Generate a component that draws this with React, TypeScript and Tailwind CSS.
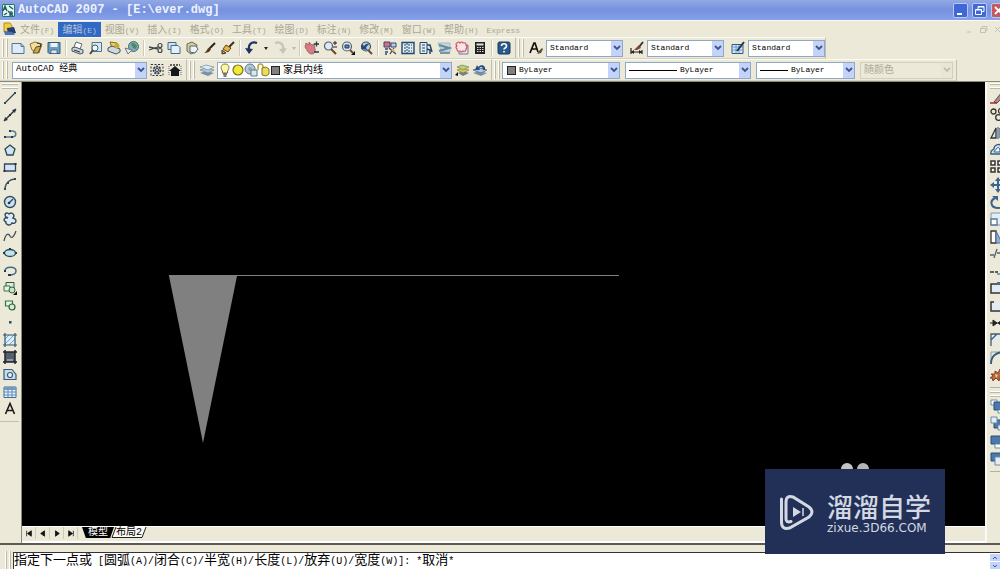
import type { ReactNode } from 'react'

const icons: Record<string, ReactNode> = {
  new: <path d="M2 3.500h9l3 3v7H2z M11 3.500v3h3" fill="#dcebf7" stroke="#4f7696" />,
  open: <><path d="M2 4l5-2 7 2-3 9-7-3z" fill="#f3df9b" stroke="#8a7738" /><path d="M5 13l3-6 5-1-3 7z" fill="#d2aa45" stroke="#5e4e25" /><path d="M9 3l4 1-1 3" stroke="#333" fill="none" /></>,
  save: <><path d="M2 2.500h12v11H3l-1-1z" fill="#6d9cc2" stroke="#335a7b" /><path d="M4.500 3h7v4h-7z" fill="#eef5fa" /><path d="M5 10h6v3.500H5z" fill="#dce7ee" stroke="#335a7b" strokeWidth=".7" /></>,
  print: <><path d="M4 7l2-5 6 2-2 5" fill="#fff" stroke="#5a6a78" /><path d="M2 8l3-1 8 3v3l-3 1-8-3z" fill="#c8d3dc" stroke="#44535f" /><path d="M4 10l6 2" stroke="#333" /></>,
  preview: <><path d="M4 2.500h9.500v9H4z" fill="#d7e7f4" stroke="#4f7696" /><circle cx="7" cy="8" r="3" fill="#eef8ff" stroke="#4d5b66" /><path d="M5 10l-3 4" stroke="#4b4b4b" strokeWidth="2" /></>,
  publish: <><path d="M4 2l7 1 2 6-7-1z" fill="#f0cf5e" stroke="#806b26" /><path d="M2 8l4-2 8 3v3l-4 2-8-3z" fill="#cfd8df" stroke="#44535f" /><circle cx="11" cy="6" r="2.500" fill="#c9a93a" /></>,
  globe: <><circle cx="9.500" cy="6.500" r="5" fill="#7ea9be" stroke="#456d78" /><path d="M7 4c3-3 4 1 6 1l-1 4-3-1z" fill="#4f8a5c" /><path d="M1 8l7 2-4 4z" fill="#e6e9ec" stroke="#6c7880" /></>,
  cut: <><path d="M1 7l9 2M1 10l9-3" stroke="#40484f" strokeWidth="1.300" /><circle cx="12" cy="10.500" r="2" fill="none" stroke="#40484f" strokeWidth="1.200" /><circle cx="12" cy="5.500" r="2" fill="none" stroke="#40484f" strokeWidth="1.200" /></>,
  copy: <><path d="M2 2.500h8v7H2z" fill="#cfe2f1" stroke="#42698a" /><path d="M5 5.500h7l2 2v6H5z" fill="#e4f0fa" stroke="#42698a" /></>,
  paste: <><path d="M3 4l5-2 5 3-1 7-5 2-4-3z" fill="#d7cf9e" stroke="#6d6847" /><path d="M6 6h6l2 3-3 4-5-1z" fill="#edf3f7" stroke="#51697b" /></>,
  brush: <><path d="M13 3L8 8" stroke="#222" strokeWidth="2" /><path d="M8 7l1 2c-1 3-4 4-7 4 3-1 3-5 6-6z" fill="#55371f" /></>,
  match: <><path d="M14 2L9 7" stroke="#3c3022" strokeWidth="2" /><path d="M6 5l5 3-3 4-5-3z" fill="#e8b14a" stroke="#60451b" /><path d="M2 10l4 3-4 1z" fill="#d69b3a" stroke="#333" /></>,
  undo: <><path d="M13 3C7 1 4 5 5 10" fill="none" stroke="#1b365f" strokeWidth="2.200" /><path d="M1 8l4 6 4-5z" fill="#1b365f" /></>,
  redo: <><path d="M3 3c6-2 9 2 8 7" fill="none" stroke="#c3c4c0" strokeWidth="2.200" /><path d="M15 8l-4 6-4-5z" fill="#c3c4c0" /></>,
  pan: <><path d="M2 3l3 2 0-3 3 3 2-1 1 5c1 3-1 5-3 5C4 14 3 10 1 7z" fill="#d57c83" stroke="#8f4c58" strokeWidth=".7" /><path d="M10 4h5M12.500 1.500v5M10 12h5" stroke="#283745" strokeWidth="1.300" /></>,
  zoomRt: <><circle cx="6.500" cy="6" r="4" fill="#dceaf4" stroke="#52616e" strokeWidth="1.200" /><path d="M9 9l5 5" stroke="#684a2f" strokeWidth="2" /><path d="M11 3h4M13 1v4M11 7h4" stroke="#222" /></>,
  zoomWin: <><circle cx="7" cy="6.500" r="4.500" fill="#dceaf4" stroke="#52616e" strokeWidth="1.200" /><path d="M5 5h4v3H5z" fill="#5f87b8" stroke="#233b61" /><path d="M10 10l3 3" stroke="#684a2f" strokeWidth="2" /><path d="M15 11v4h-4z" fill="#111" /></>,
  zoomPrev: <><circle cx="8" cy="6.500" r="4.500" fill="#bdd0e0" stroke="#42515f" strokeWidth="1.200" /><path d="M3 9l1-5 2 2c2-3 5-3 7-2-3 0-4 2-5 4l2 2z" fill="#264a7c" /><path d="M10 10l4 4" stroke="#684a2f" strokeWidth="2" /></>,
  props: <><path d="M2 2h6v5H2z" fill="#d86e76" stroke="#34447b" /><path d="M9 3h5v4H9z" fill="#b8cde3" stroke="#34447b" /><path d="M3 9h3M3 12h3M3 14h2M7 8l7 6M12 8l-4 6" stroke="#3c4566" strokeWidth="1.300" /><circle cx="11" cy="10" r="1.500" fill="#e6b74e" /></>,
  center: <><path d="M2 2.500h12v11H2z" fill="#dcecf8" stroke="#264763" strokeWidth="1.400" /><path d="M4 5h2M8 5h4M4 8h2M8 8h4M4 11h2M8 11h4M7 3v10" stroke="#264763" strokeDasharray="2 1" /></>,
  palettes: <><path d="M2 2.500h7v11H2z" fill="#dcecf8" stroke="#264763" /><path d="M4 5h3M4 8h3M4 11h3" stroke="#264763" /><path d="M9 5l3 0 2 7M9 9l3 1v4" fill="none" stroke="#264763" strokeWidth="1.500" /></>,
  sheet: <><path d="M2 3h12v9H6z" fill="#c9d6df" stroke="#a5b6c1" /><path d="M3 5l10 3-10 3" fill="none" stroke="#5f8b9f" strokeWidth="2" /><path d="M4 12h10v2H4z" fill="#7596a9" /></>,
  markup: <><path d="M5 5h9v9H5z" fill="#dfe5ea" stroke="#6d7f8f" /><path d="M3 3q2-2 3 0 2-2 3 0 3-1 3 2 2 2 0 4 0 3-3 2-2 2-3 0-3 1-3-2-2-2 0-3-2-2 0-3z" fill="#fbe4e6" stroke="#cf5468" strokeWidth="1.200" /></>,
  calc: <><path d="M3 2h10v12H3z" fill="#222" /><path d="M4.500 3.500h7v2h-7z" fill="#d8e4d8" /><path d="M5 7.500h7M5 9.500h7M5 11.500h7" stroke="#ddd" strokeDasharray="1.500 1" /></>,
  help: <><rect x="2" y="2" width="12" height="12" rx="1.500" fill="#285a8e" stroke="#17395c" /><path d="M5.500 6c0-3 5-3 5 0 0 2-2.500 2-2.500 3.500M8 11v1.500" stroke="#fff" strokeWidth="1.600" fill="none" /></>,
  textStyle: <><path d="M2 13L6 3h1l3 9M4 9h5" fill="none" stroke="#111" strokeWidth="1.700" /><path d="M14 8l-3 3-2 3 4-1 2-4z" fill="#5a4a38" /></>,
  dimStyle: <><path d="M2 8v6M2 12h11M13 10v4" stroke="#222" strokeWidth="1.200" /><path d="M2 12l3-2v4zM13 12l-3-2v4z" fill="#222" /><path d="M14 2l-4 5" stroke="#333" strokeWidth="2" /><path d="M10 5l2 3-4 2H5z" fill="#774837" /></>,
  tableStyle: <><path d="M2 4.500h11v9H2z" fill="#d7e8f6" stroke="#315a8b" /><path d="M2 7h11M6 5v8M9 5v8M2 10h11" stroke="#6f99c4" /><path d="M14 2L7 11" stroke="#24384d" strokeWidth="2" /></>,
  gear: <><path d="M2 2.500h12v11H2z" fill="none" stroke="#333" strokeDasharray="2 1.500" /><circle cx="8" cy="8" r="3.500" fill="#b5bec5" stroke="#35414b" strokeWidth="1.800" strokeDasharray="2 1" /><circle cx="8" cy="8" r="1.500" fill="#fff" stroke="#333" /></>,
  home: <><path d="M3 3h10" stroke="#333" strokeWidth="1.500" strokeDasharray="2 1" /><path d="M2 9l6-5 6 5h-2v5H4V9z" fill="#15181a" /><path d="M2 4v10M14 4v9" stroke="#666" strokeDasharray="1 1" /></>,
  layers: <><path d="M1 11l6-2 8 2-6 3z" fill="#7992a7" /><path d="M1 8l6-2 8 2-6 3z" fill="#b6cad9" stroke="#607c91" strokeWidth=".6" /><path d="M1 5l6-2 8 2-6 3z" fill="#dcebf4" stroke="#607c91" strokeWidth=".6" /></>,
  layerCur: <><path d="M4 11l5-2 6 2-6 3z" fill="#6d8396" /><path d="M3 8l5-2 7 2-6 3z" fill="#e1c848" stroke="#7c7131" strokeWidth=".6" /><path d="M3 5l5-2 7 2-6 3z" fill="#b6cf82" stroke="#65793e" strokeWidth=".6" /><path d="M1 13l3-3v4z" fill="#111" /></>,
  layerPrev: <><path d="M1 11l6-2 8 2-6 3z" fill="#7992a7" /><path d="M1 8l6-2 8 2-6 3z" fill="#b6cad9" stroke="#607c91" /><path d="M13 8c1-5-4-6-7-3L5 3 3 8l5 0-1-2c2-2 4-1 4 2z" fill="#274c82" /></>,
  bulb: <><path d="M5.500 9C3 6 4 2 8 2s5 4 2.500 7v2h-5z" fill="#fff6a5" stroke="#7b7440" /><path d="M6 12h4M6.500 14h3" stroke="#555" strokeWidth="1.400" /></>,
  sun: <circle cx="8" cy="8" r="5" fill="#f4e83c" stroke="#77721c" strokeWidth="1.200" />,
  freeze: <><circle cx="7" cy="7" r="5" fill="#b7c9d4" stroke="#5d7787" /><circle cx="7" cy="7" r="2" fill="#8fa9b8" /><path d="M8 8h6v6H8z" fill="#dce7ee" stroke="#5d7787" /></>,
  lock: <><path d="M2 8V5c0-4 5-4 5 0v2" fill="none" stroke="#b5a63a" strokeWidth="1.600" /><path d="M6 6l4-1 3 2v5l-3 2-4-1z" fill="#e6dc62" stroke="#857719" /></>,

  line: <><path d="M3 13L13 3" stroke="#39454e" strokeWidth="1.200" /><path d="M2 12h2v2H2zM12 2h2v2h-2z" fill="#264e66" /></>,
  xline: <><path d="M2 14L14 2" stroke="#30363b" strokeWidth="1.400" /><path d="M2 14l1-4 3 3zM14 2l-4 1 3 3zM7 7h2v2H7z" fill="#25343e" /></>,
  pline: <><path d="M2 12h8c5 0 5-6 0-6H8" fill="none" stroke="#56798f" strokeWidth="1.600" /><path d="M2 11h2v2H2zM9 11h2v2H9zM7 5h2v2H7z" fill="#253d4b" /></>,
  polygon: <path d="M8 3l5 4-2 6H5L3 7z" fill="#cce4ef" stroke="#2b4655" strokeWidth="1.300" />,
  rect: <><path d="M2.500 5h11v7h-11z" fill="#d5e4f5" stroke="#334557" strokeWidth="1.300" /><path d="M1.500 11h2v2h-2zM12.500 4h2v2h-2z" fill="#1b3448" /></>,
  arc: <><path d="M3 13C3 7 8 3 13 3" fill="none" stroke="#445460" strokeWidth="1.300" /><path d="M2 12h2v2H2zM5 6h2v2H5zM12 2h2v2h-2z" fill="#264e66" /></>,
  circle: <><circle cx="8" cy="8" r="5.500" fill="#cce2f0" stroke="#334a5b" strokeWidth="1.400" /><path d="M7 9l4-4" stroke="#244966" strokeWidth="1.300" /><circle cx="7" cy="9" r="1.300" fill="#193c57" /></>,
  cloud: <path d="M4 6C1 2 6 1 7 3c4-3 6 2 4 4 5 1 3 7-1 5-2 4-7 1-6-1-4-2-1-5 2-4z" fill="#dcebf3" stroke="#314c5c" strokeWidth="1.400" />,
  spline: <path d="M2 13C4 4 7 6 8 8s3 3 6-5" fill="none" stroke="#46525a" strokeWidth="1.300" />,
  ellipse: <><ellipse cx="8" cy="8" rx="5.500" ry="3.500" fill="#c1e1ed" stroke="#304957" strokeWidth="1.300" /><path d="M1 7h2v2H1zM7 3h2v2H7zM13 7h2v2h-2z" fill="#1d3b4b" /></>,
  earc: <><path d="M3 8c0-5 11-5 11 0 0 4-4 4-7 4" fill="none" stroke="#456b84" strokeWidth="1.500" /><path d="M2 7h2v2H2zM6 11h3v2H6z" fill="#233d4c" /></>,
  insert: <><path d="M4 2.500h8v6H4z" fill="#dcebdc" stroke="#36543d" /><path d="M2 6h6v5H2z" fill="#e4f3e3" stroke="#367442" /><circle cx="10" cy="10" r="3" fill="#cae1cc" stroke="#2e623b" /><path d="M15 11v4h-4z" fill="#111" /></>,
  block: <><path d="M3.500 4h7v5h-7z" fill="#e4f3e3" stroke="#367442" strokeWidth="1.200" /><circle cx="10" cy="10" r="3" fill="#d5ead8" stroke="#2e623b" strokeWidth="1.200" /></>,
  point: <path d="M7 7h2.500v2.500H7z" fill="#1c5368" />,
  hatch: <><path d="M3 3h10v10H3z" fill="#d9edfb" /><path d="M3 7l4-4M3 12l9-9M7 13l6-6" stroke="#76a6c6" /><path d="M3 1v14M13 1v14M1 3h14M1 13h14" stroke="#355468" strokeWidth="1.200" /></>,
  gradient: <><path d="M3 3h10v10H3z" fill="#555f69" /><path d="M5 10h6v2H5z" fill="#929ba3" /><path d="M3 1v14M13 1v14M1 3h14M1 13h14" stroke="#20272c" strokeWidth="1.500" /></>,
  region: <><path d="M2 3.500h8l4 5v5H2z" fill="#c5ddef" stroke="#385d7a" strokeWidth="1.200" /><circle cx="8" cy="9" r="2.500" fill="#f4f5ed" stroke="#385d7a" strokeWidth="1.200" /></>,
  table: <><path d="M2 3h12v10.500H2z" fill="#e7f1fa" stroke="#416b98" /><path d="M2 3h12v3H2z" fill="#759bc4" /><path d="M6 4v9M10 4v9M2 8h12M2 11h12" stroke="#5c8dba" /></>,
  mtext: <path d="M3.500 13L8 2.500 12.500 13M5 9.500h6" fill="none" stroke="#1b1b1b" strokeWidth="1.600" />,

  erase: <><path d="M4 12L12 2l3 3-8 8z" fill="#b78986" stroke="#5b4b4b" /><path d="M0 13h7" stroke="#a02a35" strokeWidth="1.500" /></>,
  copyObj: <><circle cx="3.500" cy="4.500" r="2.500" fill="none" stroke="#333" strokeWidth="1.300" /><circle cx="11" cy="4" r="2.500" fill="none" stroke="#333" strokeWidth="1.300" /><circle cx="8.500" cy="10.500" r="2.800" fill="none" stroke="#333" strokeWidth="1.300" /></>,
  mirror: <><path d="M1 13L6 3v10z" fill="#dbe7f0" stroke="#333" strokeWidth="1.300" /><path d="M8 2v12" stroke="#4a76ad" strokeWidth="1.300" /><path d="M15 13L10 3v10z" fill="#7fa3c8" stroke="#333" /></>,
  offset: <><path d="M1 12c-1-4 2-4 3-5 0-5 7-6 8-2 4 1 4 7 1 7z" fill="#d6e8f5" stroke="#355d80" strokeWidth="1.400" /><path d="M4 10c0-2 2-1 3-4 2-2 3 1 3 4z" fill="#fff" stroke="#355d80" /></>,
  array: <path d="M1 2h4v4H1zM8 2h4v4H8zM1 9h4v4H1zM8 9h4v4H8z" fill="#f6f6f0" stroke="#333" strokeWidth="1.500" />,
  move: <path d="M0 8l4-3v2h3V4H5l3-4 3 4H9v3h3V5l4 3-4 3V9H9v3h2l-3 4-3-4h2V9H4v2z" fill="#3e638f" />,
  rotate: <><path d="M5 4c-6 3-4 10 3 10 7 0 7-8 4-10" fill="none" stroke="#3e638f" strokeWidth="2" /><path d="M2 2h6v5z" fill="#3e638f" /></>,
  scale: <><path d="M1 2h12v12H1z" fill="#e3edf4" stroke="#8297a6" /><path d="M1 8h6v6H1z" fill="#fff" stroke="#577897" strokeWidth="1.300" /></>,
  stretch: <><path d="M1 2h5v12H1z" fill="#fff" stroke="#333" strokeWidth="1.300" /><path d="M6 2l6 12H6z" fill="#8db1d6" stroke="#4d6c91" /></>,
  trim: <path d="M0 9h4M7 7h6M4 12l3-9" stroke="#52626c" strokeWidth="1.300" />,
  extend: <><path d="M0 9h8" stroke="#333" strokeWidth="1.400" strokeDasharray="4 1" /><path d="M7 11h6" stroke="#4f83a4" strokeWidth="1.400" /></>,
  breakPt: <><path d="M1 4h12v9H1z" fill="#e1ebf3" stroke="#333" strokeWidth="1.500" /><path d="M7 2h3v3H7z" fill="#446d98" /></>,
  breakObj: <path d="M4 4H1v9h12V4h-3" fill="#e1ebf3" stroke="#333" strokeWidth="1.500" />,
  join: <path d="M0 8h13M3 5l4 3-4 3zM12 5L8 8l4 3z" fill="#222" stroke="#222" />,
  chamfer: <path d="M1 14V8l6-6h8M1 8V2h6" fill="#e1ebf3" stroke="#445b70" strokeWidth="1.300" />,
  fillet: <><path d="M1 14V2h12" fill="none" stroke="#8aa0b3" /><path d="M1 14C1 6 6 2 15 2" fill="none" stroke="#345a80" strokeWidth="1.800" /></>,
  explode: <><path d="M0 11l3-2-2-2 4 0 0-3 3 2 2-4 1 3 4-1-3 4 3 3-5-1-1 4-3-3-3 3-1-3z" fill="#b9683f" stroke="#7f4334" /><path d="M5 7l3 1-2 3z" fill="#f6ce75" /></>,
  front: <><path d="M1 1h6v5H1z" fill="#fff" stroke="#6d8ba5" /><path d="M4 3h9v8H4z" fill="#4b79ae" stroke="#284f7d" /><path d="M8 11h6v3H8z" fill="#fff" stroke="#6d8ba5" /></>,
  back: <><path d="M4 4h8v8H4z" fill="#4b79ae" stroke="#284f7d" /><path d="M1 1h6v6H1zM8 9h6v5H8z" fill="#e4edf4" stroke="#6d8ba5" /></>,
  above: <><path d="M1 2h13v8H1z" fill="#4b79ae" stroke="#284f7d" /><path d="M5 10h8v4H5z" fill="#fff" stroke="#6d8ba5" /></>,
  under: <><path d="M1 2h13v8H1z" fill="#4b79ae" stroke="#284f7d" /><path d="M5 6h8v8H5z" fill="#e4edf4" stroke="#6d8ba5" /></>,
}

function Icon({ name }: { name: string }) {
  return <svg viewBox="0 0 16 16" className="h-4 w-4 shrink-0" fill="none" aria-hidden="true">{icons[name]}</svg>
}

function Tool({ name }: { name: string }) {
  return (
    <button type="button" aria-label={name} className="h-4 w-4 shrink-0">
      <Icon name={name} />
    </button>
  )
}

function Tools({ names }: { names: string[] }) {
  return <div className="flex shrink-0 gap-0.5">{names.map(n => <Tool key={n} name={n} />)}</div>
}

function Grip() {
  return (
    <div className="mx-0.5 flex h-[18px] shrink-0 gap-0.5">
      <span className="w-[2px] border-l border-r border-l-white border-r-[#bdb9a6]" />
      <span className="w-[2px] border-l border-r border-l-white border-r-[#bdb9a6]" />
    </div>
  )
}

function Sep() {
  return <span className="mx-[3px] h-4 w-[2px] shrink-0 border-l border-r border-l-[#d0ccba] border-r-white" />
}

const band = 'flex h-[22px] shrink-0 items-center border-t border-r border-b border-t-[#fbfaf4] border-r-[#c3bfad] border-b-[#d5d1bf]'

function Combo({ label, value, width, text = 'text-[8px]', disabled, children }: {
  label: string; value: string; width: string; text?: string; disabled?: boolean; children?: ReactNode
}) {
  return (
    <label className={`flex h-[17px] shrink-0 items-center border ${width} ${disabled ? 'border-[#d3cfbd] bg-[#ece9d8]' : 'border-[#8fa9c4] bg-white'}`}>
      {children}
      <select
        aria-label={label}
        disabled={disabled}
        className={`h-[15px] min-w-0 flex-1 appearance-none bg-transparent pl-[3px] outline-none ${text} ${disabled ? 'text-[#aca899]' : 'text-black'}`}
      >
        <option>{value}</option>
      </select>
      <span className={`flex h-[15px] w-[11px] shrink-0 items-center justify-center ${disabled ? 'bg-[#e9e6d6]' : 'bg-[#c3d3fb]'}`}>
        <svg viewBox="0 0 8 6" className="h-[6px] w-2" fill="none">
          <path d="M1 1l3 3 3-3" stroke={disabled ? '#c2bfae' : '#3d5687'} strokeWidth="1.800" />
        </svg>
      </span>
    </label>
  )
}

const menus = [
  ['文件', '(F)'], ['编辑', '(E)'], ['视图', '(V)'], ['插入', '(I)'], ['格式', '(O)'], ['工具', '(T)'],
  ['绘图', '(D)'], ['标注', '(N)'], ['修改', '(M)'], ['窗口', '(W)'], ['帮助', '(H)'], ['', 'Express'],
]

const drawTools = [
  'line', 'xline', 'pline', 'polygon', 'rect', 'arc', 'circle', 'cloud', 'spline', 'ellipse',
  'earc', 'insert', 'block', 'point', 'hatch', 'gradient', 'region', 'table', 'mtext',
]
const modifyTools = [
  'erase', 'copyObj', 'mirror', 'offset', 'array', 'move', 'rotate', 'scale', 'stretch', 'trim',
  'extend', 'breakPt', 'breakObj', 'join', 'chamfer', 'fillet', 'explode',
]
const orderTools = ['front', 'back', 'above', 'under']

const prompt = [
  ['指定下一点或', ' ['], ['圆弧', '(A)/'], ['闭合', '(C)/'], ['半宽', '(H)/'], ['长度', '(L)/'],
  ['放弃', '(U)/'], ['宽度', '(W)]: *'], ['取消', '*'],
]

function TitleBar() {
  const btn = 'flex h-[15px] w-[15px] shrink-0 items-center justify-center rounded-[2px] border border-[#b9c8f2]'
  return (
    <header className="flex h-5 items-center overflow-hidden bg-linear-to-b from-[#93a9e4] via-[#7591df] to-[#86a2ec] pl-[2px]">
      <svg viewBox="0 0 13 13" className="h-[13px] w-[13px] shrink-0" fill="none">
        <path d="M0 0h13v13H0z" fill="#e8f2ee" />
        <path d="M.5.5h12v12H.5z" stroke="#27756f" />
        <path d="M1 7l2-5 2 5M2 5h2M7 2l4 3M6 7l5 5M8 12V8c3-1 3 3 0 3M2 11l3-2" stroke="#14605c" strokeWidth="1.300" />
      </svg>
      <h1 className="ml-[3px] flex-1 whitespace-pre text-[12px] leading-5 font-bold text-[#eef2ff]">AutoCAD 2007 - [E:\ever.dwg]</h1>
      <div className="-mr-[6px] flex gap-1">
        <button type="button" aria-label="最小化" className={`${btn} bg-[#3f68d4]`}>
          <svg viewBox="0 0 13 13" className="h-[13px] w-[13px]"><path d="M3 9h5v2H3z" fill="#fff" /></svg>
        </button>
        <button type="button" aria-label="还原" className={`${btn} bg-[#3f68d4]`}>
          <svg viewBox="0 0 13 13" className="h-[13px] w-[13px]" fill="none" stroke="#fff"><path d="M5 5V2.500h6v5H8.500M2.500 5.500h6v5h-6zM2.500 6h6M5 3h6" /></svg>
        </button>
        <button type="button" aria-label="关闭" className={`${btn} bg-[#c25a5e]`}>
          <svg viewBox="0 0 13 13" className="h-[13px] w-[13px]" stroke="#fff" strokeWidth="1.800"><path d="M3 3l7 7M10 3l-7 7" /></svg>
        </button>
      </div>
    </header>
  )
}

function MenuBar() {
  return (
    <nav className="flex h-[17px] items-center overflow-hidden border-t border-[#faf9f3] pl-[3px] text-[#aaa695]">
      <svg viewBox="0 0 13 14" className="h-[14px] w-[13px] shrink-0">
        <path d="M1 1h6l2 3v6H1z" fill="#f0cc45" stroke="#b08f24" />
        <path d="M4 6l7-1 2 6-8 2z" fill="#243d73" />
        <path d="M1 9l8 1 3 3H2z" fill="#4a72b5" />
      </svg>
      <div className="flex flex-1">
        {menus.map(([name, key]) => (
          <button
            key={name + key}
            type="button"
            className={`h-[15px] px-1 leading-[14px] whitespace-nowrap ${name === '编辑' ? 'bg-[#316ac5] text-[#b5c3d8]' : ''}`}
          >
            <span className="text-[10px]">{name}</span>
            <span className="text-[8px]">{key}</span>
          </button>
        ))}
      </div>
      <div className="-mr-[2px] flex gap-[5px]">
        <button type="button" aria-label="最小化窗口"><svg viewBox="0 0 9 9" className="h-[9px] w-[9px]"><path d="M2 7h4" stroke="#c5c2b2" /></svg></button>
        <button type="button" aria-label="还原窗口"><svg viewBox="0 0 9 9" className="h-[9px] w-[9px]" fill="none" stroke="#c5c2b2"><path d="M3 3V1.500h5v4H6.500M1.500 3.500h5v4h-5z" /></svg></button>
        <button type="button" aria-label="关闭窗口"><svg viewBox="0 0 9 9" className="h-[9px] w-[9px]" stroke="#c5c2b2"><path d="M2 2l5 5M7 2L2 7" /></svg></button>
      </div>
    </nav>
  )
}

function StandardToolbar() {
  return (
    <div className="flex overflow-hidden">
      <div className={`${band} w-[516px]`}>
        <Grip />
        <Tools names={['new', 'open', 'save']} />
        <Sep />
        <Tools names={['print', 'preview', 'publish', 'globe']} />
        <Sep />
        <Tools names={['cut', 'copy', 'paste', 'brush', 'match']} />
        <Sep />
        <div className="flex w-[52px] items-center gap-1">
          <Tool name="undo" />
          <svg viewBox="0 0 4 3" className="h-[3px] w-1"><path d="M0 0h4L2 3z" fill="#222" /></svg>
          <Tool name="redo" />
          <svg viewBox="0 0 4 3" className="h-[3px] w-1"><path d="M0 0h4L2 3z" fill="#bbb8a8" /></svg>
        </div>
        <Sep />
        <Tools names={['pan', 'zoomRt', 'zoomWin', 'zoomPrev']} />
        <Sep />
        <Tools names={['props', 'center', 'palettes', 'sheet', 'markup', 'calc']} />
        <Sep />
        <Tools names={['help']} />
      </div>
      <div className={`${band} gap-0.5`}>
        <Grip />
        <Tool name="textStyle" />
        <Combo label="文字样式" value="Standard" width="w-[77px]" />
        <span className="w-0.5" />
        <Tool name="dimStyle" />
        <Combo label="标注样式" value="Standard" width="w-[77px]" />
        <span className="w-0.5" />
        <Tool name="tableStyle" />
        <Combo label="表格样式" value="Standard" width="w-[77px]" />
      </div>
    </div>
  )
}

function LayerToolbar() {
  const swatch = 'h-[9px] w-[9px] shrink-0 border border-[#222] bg-[#808080]'
  return (
    <div className="flex overflow-hidden">
      <div className={`${band} w-[187px] gap-0.5`}>
        <Grip />
        <Combo label="工作空间" value="AutoCAD 经典" width="w-[135px]" text="text-[9px]" />
        <Tools names={['gear', 'home']} />
      </div>
      <div className={`${band} w-[305px] gap-0.5`}>
        <Grip />
        <Tool name="layers" />
        <Combo label="图层" value="家具内线" width="w-[235px]" text="text-[10px]">
          <span className="-ml-px flex shrink-0 items-center">
            <Icon name="bulb" />
            <span className="-ml-[3px]"><Icon name="sun" /></span>
            <span className="-ml-[3px]"><Icon name="freeze" /></span>
            <span className="-ml-[3px]"><Icon name="lock" /></span>
          </span>
          <span className={`${swatch} -ml-px`} />
        </Combo>
        <Tools names={['layerCur', 'layerPrev']} />
      </div>
      <div className={`${band} gap-[5px] pr-[3px]`}>
        <div className="flex items-center">
          <Grip />
          <Combo label="颜色" value="ByLayer" width="w-[118px]">
            <span className={`${swatch} ml-1`} />
          </Combo>
        </div>
        <Combo label="线型" value="ByLayer" width="w-[126px]">
          <span className="ml-[3px] h-px w-12 shrink-0 bg-black" />
        </Combo>
        <Combo label="线宽" value="ByLayer" width="w-[99px]">
          <span className="ml-[3px] h-px w-7 shrink-0 bg-black" />
        </Combo>
        <Combo label="打印样式" value="随颜色" width="w-[93px]" text="text-[10px]" disabled />
      </div>
    </div>
  )
}

function SideGrip() {
  return (
    <div className="flex w-4 shrink-0 flex-col gap-0.5">
      <span className="h-[2px] border-t border-b border-t-white border-b-[#bdb9a6]" />
      <span className="h-[2px] border-t border-b border-t-white border-b-[#bdb9a6]" />
    </div>
  )
}

function SheetTabs() {
  const nav = ['M3 1v7M9 1v7L4 4.500z', 'M8 1v7L3 4.500z', 'M4 1v7l5-3.500z', 'M9 1v7M3 1v7l5-3.500z']
  return (
    <div className="flex h-[17px] items-start border-t border-b-2 border-t-white border-b-white">
      {nav.map((d, i) => (
        <button key={i} type="button" aria-label={['首页', '上一个', '下一个', '末页'][i]} className="flex h-[12px] w-[14px] items-center justify-center border-r border-[#cfcbb9]">
          <svg viewBox="0 0 12 9" className="h-[7px] w-[10px]"><path d={d} fill="#111" stroke="#111" /></svg>
        </button>
      ))}
      <button type="button" className="ml-1 h-[11px] w-[32px] bg-black text-[10px] leading-[11px] text-white [clip-path:polygon(0_0,100%_0,88%_100%,12%_100%)]">模型</button>
      <button type="button" className="relative -ml-[3px] h-[11px] w-[36px] text-[10px] leading-[11px] text-black">
        <svg viewBox="0 0 36 11" className="absolute inset-0 h-full w-full"><path d="M5 0l-4 10.500h30L35 0" fill="#fbfaf5" stroke="#222" /></svg>
        <span className="relative">布局2</span>
      </button>
    </div>
  )
}

function Watermark() {
  return (
    <div className="absolute right-[55px] bottom-[15px]">
      <div className="absolute -top-[6px] left-[76px] flex gap-1">
        <span className="h-3 w-3 rounded-full bg-[#c4c4c4]" />
        <span className="h-3 w-3 rounded-full bg-[#b4b4b4]" />
      </div>
      <div className="relative flex h-[85px] w-[180px] items-center gap-3 bg-[#223057] pl-[14px] text-[#d3d8e2]">
        <svg viewBox="0 0 36 36" className="h-9 w-9 shrink-0" fill="none" stroke="currentColor">
          <path d="M2.500 5v23q0 8 8 6L30 23q6-5 0-10L14 3Q7 1 7 8v17q0 4 5 2.500" strokeWidth="3" strokeLinecap="round" />
          <path d="M14 13l8 5-8 5z" fill="currentColor" stroke="none" />
          <path d="M24 14v8" strokeWidth="1.500" />
        </svg>
        <div className="flex flex-col">
          <div className="font-['Noto_Sans_CJK_SC',sans-serif] text-[26px] leading-[32px] font-medium whitespace-nowrap">溜溜自学</div>
          <div className="font-['DejaVu_Sans',sans-serif] text-[12px] leading-[12px]">zixue.3D66.COM</div>
        </div>
      </div>
    </div>
  )
}

export default function App() {
  return (
    <div className="relative flex min-h-screen w-full flex-col overflow-hidden bg-[#ece9d8] font-['Liberation_Mono','Noto_Sans_CJK_SC',monospace] select-none">
      <TitleBar />
      <MenuBar />
      <StandardToolbar />
      <LayerToolbar />

      <div className="flex flex-1 overflow-hidden border-t border-[#8d8a7c]">
        <aside className="flex w-[21px] shrink-0 flex-col items-center pt-px pr-[2px]">
          <SideGrip />
          <div className="mt-px flex h-[327px] flex-col justify-between">
            {drawTools.map(n => <Tool key={n} name={n} />)}
          </div>
          <span className="mt-1 h-px w-full bg-[#c3bfad]" />
        </aside>

        <main className="flex min-w-0 flex-1 flex-col border-l border-[#8d8a7c]">
          <div className="flex-1 bg-black">
            <svg viewBox="0 0 640 400" className="h-[400px] w-[640px]" fill="none">
              <path d="M147 194h68l-34 167z" fill="#808080" />
              <path d="M147 193.500h450" stroke="#808080" />
            </svg>
          </div>
          <SheetTabs />
        </main>

        <aside className="flex w-[15px] shrink-0 flex-col items-start overflow-hidden border-l-2 border-[#faf9f3] pt-px pl-[3px]">
          <SideGrip />
          <div className="mt-px flex h-[293px] shrink-0 flex-col justify-between">
            {modifyTools.map(n => <Tool key={n} name={n} />)}
          </div>
          <span className="mt-1 mb-[3px] h-px w-full shrink-0 bg-[#b5b19f]" />
          <SideGrip />
          <div className="mt-0.5 flex h-[68px] shrink-0 flex-col justify-between">
            {orderTools.map(n => <Tool key={n} name={n} />)}
          </div>
          <span className="mt-1 h-px w-full shrink-0 bg-[#b5b19f]" />
        </aside>
      </div>

      <footer className="flex h-[26px] shrink-0 border-t-2 border-[#5c5a52]">
        <div className="flex w-[13px] shrink-0 justify-end pt-[6px]"><Grip /></div>
        <div className="mt-[7px] flex min-w-0 flex-1 border-t border-l border-[#333] bg-white">
          <p className="flex-1 overflow-hidden leading-[14px] whitespace-pre text-black">
            {prompt.map(([cn, en], i) => (
              <span key={i}><span className="text-[13px]">{cn}</span><span className="text-[10px]">{en}</span></span>
            ))}
          </p>
          <div className="flex w-[10px] shrink-0 flex-col gap-px pt-px">
            <button type="button" aria-label="向上滚动" className="flex h-[7px] items-center justify-center bg-[#c3d3fb]"><svg viewBox="0 0 6 4" className="h-1 w-[6px]"><path d="M1 3l2-2 2 2" fill="none" stroke="#3d5687" /></svg></button>
            <button type="button" aria-label="向下滚动" className="flex h-[7px] items-center justify-center bg-[#c3d3fb]"><svg viewBox="0 0 6 4" className="h-1 w-[6px]"><path d="M1 1l2 2 2-2" fill="none" stroke="#3d5687" /></svg></button>
          </div>
        </div>
      </footer>
      <Watermark />
    </div>
  )
}
